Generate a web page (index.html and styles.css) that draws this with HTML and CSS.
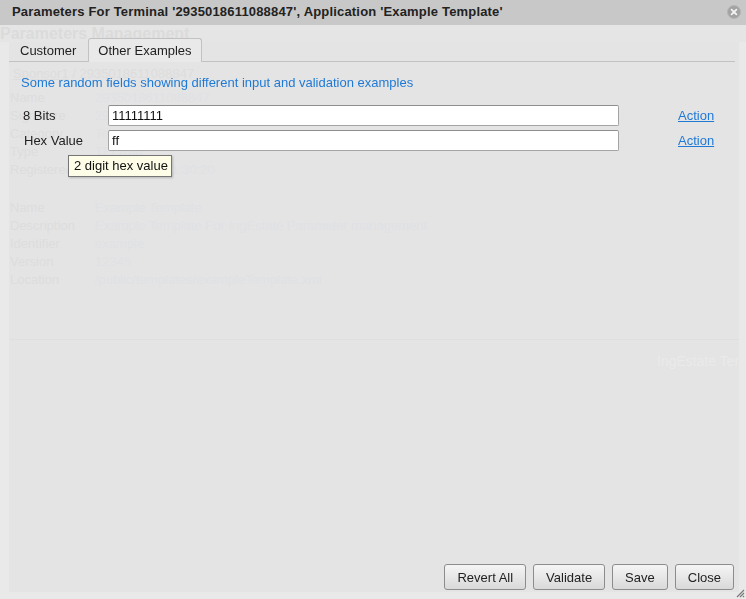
FILE: index.html
```html
<!DOCTYPE html>
<html>
<head>
<meta charset="utf-8">
<link rel="stylesheet" href="styles.css">
</head>
<body>
<div class="page">
  <h1 class="page-title">Parameters Management</h1>
  <div class="page-panel">
    <div class="crumb"><span class="crumb-link">Sponsor1</span> / 2935018611088847</div>
    <table class="kv">
      <tr><td>Name</td><td class="v">2935018611088847</td></tr>
      <tr><td>Signature</td><td class="v">2935018611088847</td></tr>
      <tr><td>Category</td><td class="v">Terminal</td></tr>
      <tr><td>Type</td><td class="v">TELIUM</td></tr>
      <tr><td>Registered</td><td class="v">2013-05-14 11:30:20</td></tr>
    </table>
    <table class="kv kv2">
      <tr><td>Name</td><td class="v">Example Template</td></tr>
      <tr><td>Description</td><td class="v">Example Template For IngEstate Parameter management</td></tr>
      <tr><td>Identifier</td><td class="v">example</td></tr>
      <tr><td>Version</td><td class="v">12345</td></tr>
      <tr><td>Location</td><td class="v">/public/templates/exampleTemplate.xml</td></tr>
    </table>
    <div class="page-footer">
      <span class="footer-text">IngEstate Terminal M</span>
    </div>
  </div>
</div>

<div class="dialog">
  <div class="titlebar">
    <span class="title">Parameters For Terminal '2935018611088847', Application 'Example Template'</span>
    <span class="close-btn">
      <svg width="14" height="14" viewBox="0 0 14 14">
        <circle cx="7" cy="7" r="6.5" fill="#a3a3a3" stroke="#b4b4b4" stroke-width="1"/>
        <path d="M4.6 4.6 L9.4 9.4 M9.4 4.6 L4.6 9.4" stroke="#f2f2f2" stroke-width="1.8" stroke-linecap="round"/>
      </svg>
    </span>
  </div>
  <div class="dialog-body">
    <div class="tabs">
      <div class="tab">Customer</div>
      <div class="tab active">Other Examples</div>
    </div>
    <div class="tab-content">
      <div class="desc">Some random fields showing different input and validation examples</div>
      <div class="fields">
        <div class="field-row">
          <label class="lbl">8 Bits</label>
          <input class="inp" type="text" value="11111111">
          <a class="action" href="#">Action</a>
        </div>
        <div class="field-row">
          <label class="lbl lbl-hex">Hex Value</label>
          <input class="inp" type="text" value="ff">
          <a class="action" href="#">Action</a>
          <div class="tooltip">2 digit hex value</div>
        </div>
      </div>
    </div>
  </div>
  <div class="dialog-footer">
    <button class="btn">Revert All</button>
    <button class="btn">Validate</button>
    <button class="btn">Save</button>
    <button class="btn">Close</button>
    <svg class="grip" width="10" height="10" viewBox="0 0 10 10">
      <path d="M9 2 L2 9 M9 5 L5 9 M9 8 L8 9" stroke="#777" stroke-width="1.1"/>
    </svg>
  </div>
</div>
</body>
</html>
```

FILE: styles.css
```css
html, body {
  margin: 0;
  padding: 0;
  width: 746px;
  height: 599px;
  overflow: hidden;
}
body {
  background: #e9e9e9;
  font-family: "Liberation Sans", Arial, sans-serif;
  font-size: 13px;
}

/* ghost page behind the modal */
.page {
  height: 599px;
  display: flex;
  flex-direction: column;
}
.page-title {
  margin: 0;
  padding: 26px 0 0 0;
  font-size: 16px;
  font-weight: bold;
  line-height: 16px;
  color: #dbdbdb;
  background: #e5e5e5;
}
.page-panel {
  flex: 1;
  margin: 0 7px 7px 9px;
  background: #e4e4e4;
  padding: 24px 0 0 1px;
  overflow: hidden;
}
.crumb {
  margin-left: 3px;
  color: #dddddd;
  line-height: 16px;
}
.crumb-link {
  text-decoration: underline;
}
.kv {
  border-collapse: collapse;
  margin-top: 7px;
  color: #dddddd;
}
.kv td {
  padding: 0;
  height: 18px;
  line-height: 18px;
  width: 85px;
  white-space: nowrap;
}
.kv td.v {
  color: #dfe1e4;
  width: auto;
}
.kv2 {
  margin-top: 20px;
}
.page-footer {
  margin-top: 50px;
  border-top: 1px solid #dfdfdf;
  padding-top: 13px;
  padding-left: 647px;
  white-space: nowrap;
}
.footer-text {
  color: #eaeaea;
  font-size: 14px;
}

/* dialog */
.dialog {
  position: fixed;
  left: 0;
  top: 0;
  width: 746px;
  height: 599px;
  display: flex;
  flex-direction: column;
}
.titlebar {
  height: 25px;
  background: #c8c8c8;
  display: flex;
  align-items: center;
  justify-content: space-between;
  padding: 0 5px 2px 12px;
  box-sizing: border-box;
}
.title {
  font-weight: bold;
  font-size: 13px;
  letter-spacing: 0.18px;
  color: #222;
}
.close-btn {
  display: flex;
}
.dialog-body {
  flex: 1;
  padding: 13px 11px 0 9px;
}
.tabs {
  display: flex;
  gap: 1px;
  border-bottom: 1px solid #c2c2c2;
  height: 23px;
}
.tab {
  padding: 0 10px;
  line-height: 23px;
  color: #222;
  border: 1px solid transparent;
  border-bottom: none;
  border-radius: 3px 3px 0 0;
  box-sizing: border-box;
  height: 24px;
}
.tab.active {
  background: #e9e9e9;
  border-color: #c2c2c2;
  padding: 0 9px;
}
.tab-content {
  padding: 13px 0 0 12px;
}
.desc {
  color: #1f7ad6;
  line-height: 16px;
}
.fields {
  margin-top: 14px;
  display: flex;
  flex-direction: column;
  gap: 4px;
}
.field-row {
  position: relative;
  display: flex;
  align-items: center;
  height: 21px;
}
.lbl {
  width: 85px;
  margin-left: 2px;
  color: #222;
}
.lbl-hex {
  margin-left: 3px;
  width: 84px;
}
.inp {
  width: 511px;
  height: 21px;
  box-sizing: border-box;
  border: 1px solid #a4a4a4;
  border-top-color: #8e8e8e;
  border-radius: 2px;
  background: #fff;
  padding: 0 3px;
  font-family: "Liberation Sans", Arial, sans-serif;
  font-size: 13px;
  color: #111;
  margin: 0;
}
.action {
  margin-left: 59px;
  color: #1f7ad6;
  text-decoration: underline;
}
.tooltip {
  position: absolute;
  left: 47px;
  top: 25px;
  width: 104px;
  height: 22px;
  box-sizing: border-box;
  background: #fdfde8;
  border: 1px solid #767676;
  box-shadow: 1px 1px 2px rgba(0,0,0,0.2);
  color: #111;
  font-size: 13px;
  line-height: 20px;
  padding-left: 5px;
  white-space: nowrap;
}

.dialog-footer {
  position: relative;
  display: flex;
  justify-content: flex-end;
  gap: 7px;
  padding: 0 12px 9px 0;
}
.btn {
  height: 26px;
  padding: 0 12px;
  border: 1px solid #8c8c8c;
  border-radius: 3px;
  background: linear-gradient(#f5f5f5, #d9d9d9);
  font-family: "Liberation Sans", Arial, sans-serif;
  font-size: 13px;
  color: #222;
  margin: 0;
}
.grip {
  position: absolute;
  right: 1px;
  bottom: 1px;
}
```
